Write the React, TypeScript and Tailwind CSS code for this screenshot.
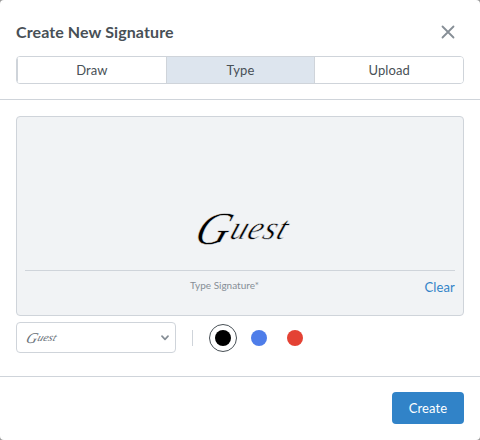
import React, { useState } from "react";

const tabs = ["Draw", "Type", "Upload"];

const colors = [
  { name: "Black", fill: "bg-black" },
  { name: "Blue", fill: "bg-[#4e7de9]" },
  { name: "Red", fill: "bg-[#e44234]" },
];

export default function App() {
  const [tab, setTab] = useState("Type");
  const [color, setColor] = useState("Black");

  return (
    <div className="h-[440px] w-[480px] overflow-hidden bg-[#999999] font-['Lato',sans-serif] text-[#485056]">
      <div className="flex h-full flex-col rounded bg-white">
        <header className="h-[100px] shrink-0 border-b border-[#cfd4da] px-4 pt-4">
          <div className="flex h-8 items-center justify-between">
            <h1 className="text-base font-bold tracking-[0.1px]">Create New Signature</h1>
            <button aria-label="Close" className="flex size-8 items-center justify-center">
              <svg width="14" height="14" viewBox="0 0 14 14" fill="none" stroke="#868e96" strokeWidth="1.8" strokeLinecap="round">
                <path d="M1.5 1.5 12.5 12.5M12.5 1.5 1.5 12.5" />
              </svg>
            </button>
          </div>
          <div className="mt-2 flex h-7 overflow-hidden rounded border border-[#cfd4da]">
            {tabs.map((t) => (
              <button
                key={t}
                onClick={() => setTab(t)}
                className={`flex-1 border-l border-[#cfd4da] pt-px text-[13px] tracking-[0.1px] ${t === tab ? "bg-[#dde5ee]" : "bg-white"}`}
              >
                {t}
              </button>
            ))}
          </div>
        </header>

        <main className="flex-1 px-4 pt-4">
          <div className="flex h-[200px] flex-col rounded border border-[#cfd4da] bg-[#f1f3f5] px-2">
            <div className="flex h-[154px] items-end justify-center border-b border-[#cfd4da] pb-[21px] pl-1.5">
              <span className="inline-block -skew-x-[20deg] font-['Liberation_Serif',serif] text-[33px] leading-[40px] tracking-[0.8px] text-black italic [-webkit-text-stroke:0.5px_#f1f3f5] first-letter:align-[-5px] first-letter:text-[46px]">
                Guest
              </span>
            </div>
            <div className="flex justify-between pt-[7px]">
              <span className="ml-[165px] text-[10px] leading-[14px] text-[#868e96]">Type Signature*</span>
              <button className="text-[13px] leading-[18px] tracking-[0.15px] text-[#3183c8]">Clear</button>
            </div>
          </div>

          <div className="mt-1.5 flex h-8 items-center">
            <button className="flex h-[31px] w-40 items-center justify-between self-start rounded border border-[#cfd4da] pr-1.5 pl-2.5">
              <span className="inline-block -skew-x-[20deg] font-['Liberation_Serif',serif] text-[11px] leading-[14px] tracking-[0.2px] text-[#687078] italic first-letter:align-[-2px] first-letter:text-[15px]">
                Guest
              </span>
              <svg width="8" height="6" viewBox="0 0 8 6" fill="none" stroke="#868e96" strokeWidth="1.7" strokeLinecap="round" strokeLinejoin="round">
                <path d="M1 1.2 4 4.3 7 1.2" />
              </svg>
            </button>
            <span className="ml-4 h-4 w-px bg-[#cfd4da]" />
            <div className="ml-4 flex gap-2">
              {colors.map((c) => (
                <button
                  key={c.name}
                  aria-label={c.name}
                  onClick={() => setColor(c.name)}
                  className={`flex size-7 items-center justify-center rounded-full border ${c.name === color ? "border-[#485056]" : "border-transparent"}`}
                >
                  <span className={`size-4 rounded-full ${c.fill}`} />
                </button>
              ))}
            </div>
          </div>
        </main>

        <footer className="flex h-16 shrink-0 justify-end border-t border-[#cfd4da] px-4 pt-[15px]">
          <button className="h-8 w-[72px] rounded bg-[#3183c8] pt-px text-[13px] tracking-[0.15px] text-white">Create</button>
        </footer>
      </div>
    </div>
  );
}
